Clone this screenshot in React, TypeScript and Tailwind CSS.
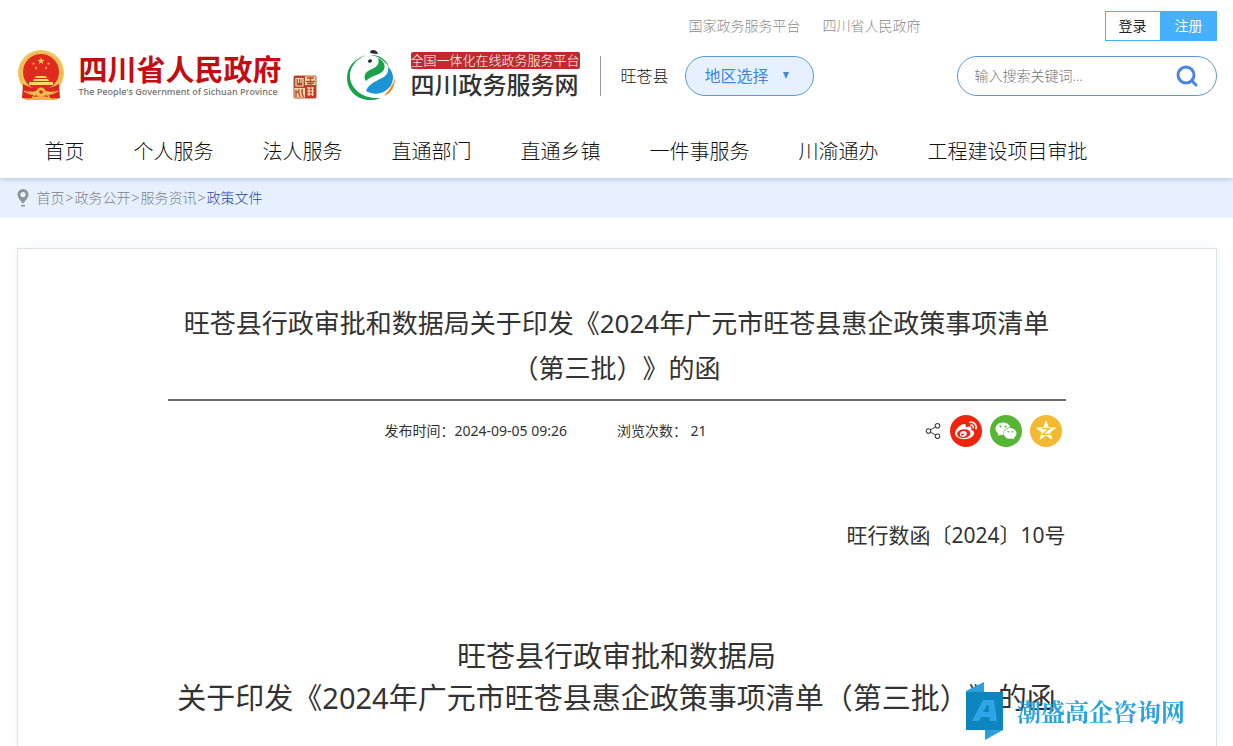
import React from 'react';
import { Search, Share2 } from 'lucide-react';
import { FaWeibo, FaWeixin } from 'react-icons/fa';

interface NavItem {
  label: string;
  href: string;
}

const topLinks: NavItem[] = [
  { label: '国家政务服务平台', href: '#national' },
  { label: '四川省人民政府', href: '#province' },
];

const navItems: NavItem[] = [
  { label: '首页', href: '#home' },
  { label: '个人服务', href: '#personal' },
  { label: '法人服务', href: '#legal' },
  { label: '直通部门', href: '#departments' },
  { label: '直通乡镇', href: '#towns' },
  { label: '一件事服务', href: '#onething' },
  { label: '川渝通办', href: '#chuanyu' },
  { label: '工程建设项目审批', href: '#projects' },
];

const crumbs: NavItem[] = [
  { label: '首页', href: '#home' },
  { label: '政务公开', href: '#open' },
  { label: '服务资讯', href: '#news' },
];

const star = '0,-1 .24,-.32 .95,-.31 .38,.12 .59,.81 0,.4 -.59,.81 -.38,.12 -.95,-.31 -.24,-.32';

const Emblem: React.FC = () => (
  <svg viewBox="0 0 48 52" className="h-[52px] w-12 shrink-0" aria-hidden="true">
    <path d="M6 34 L5 48 L12 50 L17 48 L31 48 L36 50 L43 48 L42 34 Z" fill="#d9261c" />
    <circle cx="24" cy="23" r="23" fill="#f2c45a" />
    <circle cx="24" cy="23" r="20.500" fill="none" stroke="#e8ad43" strokeWidth="1" strokeDasharray="2 1.500" />
    <circle cx="24" cy="22" r="18" fill="#e02a1d" />
    <polygon points={star} transform="translate(24 11) scale(3.6)" fill="#fbd95b" />
    <polygon points={star} transform="translate(16.500 13.500) scale(1.6)" fill="#fbd95b" />
    <polygon points={star} transform="translate(31.500 13.500) scale(1.6)" fill="#fbd95b" />
    <polygon points={star} transform="translate(19 18) scale(1.6)" fill="#fbd95b" />
    <polygon points={star} transform="translate(29 18) scale(1.6)" fill="#fbd95b" />
    <path d="M18 28 L19 26 H29 L30 28 Z M16 31 L17 29 H31 L32 31 Z M12 32 H36 V35 H12 Z" fill="#fbd95b" />
    <path d="M6 34 Q24 44 42 34 L42 40 Q34 43 29 41 L27 39 H21 L19 41 Q14 43 6 40 Z" fill="#d9261c" />
    <circle cx="24" cy="42" r="4.500" fill="#f0bd4c" />
    <circle cx="24" cy="42" r="1.800" fill="#d9261c" />
    <path d="M7 41 Q13 45 18 44 L15 49 L8 49 M41 41 Q35 45 30 44 L33 49 L40 49" fill="none" stroke="#efb444" strokeWidth="1.500" />
    <path d="M15 48 Q24 44 33 48 V50 H15 Z" fill="#efb444" />
  </svg>
);

const Seal: React.FC = () => (
  <svg viewBox="0 0 24 24" className="h-6 w-6 shrink-0" aria-hidden="true">
    <rect x="1" y="1" width="22" height="22" rx="1" fill="#f6dcae" stroke="#c0542f" />
    <rect x="1" y="1" width="11" height="12" fill="#b5432c" />
    <rect x="12" y="10" width="11" height="13" fill="#c4392b" />
    <g fill="none" stroke="#f8dfb5" strokeWidth="1.200">
      <path d="M3 3.500 H10 V11 H3 Z M5.500 4 V8 M8 4 V8" />
      <path d="M14 13 H21 M14 16 H21 M14 19 H21 M16 12 V21 M19.500 12 V21" />
    </g>
    <g fill="none" stroke="#bb4a2c" strokeWidth="1.400">
      <path d="M14 3 H21 M13 6.500 H22 M17.500 2 V10 M14 8.500 H21" />
      <path d="M3 15 V22 M6 14 Q5 18 7 22 M9.500 14 Q8 18 10.500 22 M3 17 H6" />
    </g>
  </svg>
);

const ServiceLogo: React.FC = () => (
  <svg viewBox="0 0 50 52" className="h-[52px] w-[50px] shrink-0" aria-hidden="true">
    <path d="M20 5 C7 9 1 18 1 28 C1 41 12 51 26 50 C29 50 32 49 34 48 C19 49 6 41 4 28 C3 18 9 10 20 5 Z" fill="#18a34a" />
    <path d="M24 5 C33 4 41 10 43 17 C38 10 32 6 24 5 Z" fill="#18a34a" />
    <path d="M24 3 Q24 0 27 0 Q31 0 32 4 Q28 4 24 3 Z" fill="#2d2d2d" />
    <ellipse cx="24" cy="11" rx="2.200" ry="1.600" fill="#2d2d2d" transform="rotate(-30 24 11)" />
    <path d="M32 8 C39 11 40 17 37 21 C34 25 26 25 20 31 C17 27 19 22 24 20 C31 17 34 14 32 8 Z" fill="#18a34a" />
    <path d="M42 17 C50 24 48 36 39 41 C33 45 25 44 20 41 C22 36 26 33 32 30 C39 27 43 24 42 17 Z" fill="#1a94d2" />
    <path d="M49 28 C49 36 46 43 38 46 C42 41 46 37 49 28 Z" fill="#ef8b22" />
  </svg>
);

const PinIcon: React.FC = () => (
  <svg viewBox="0 0 12 18" className="h-[18px] w-3 shrink-0" aria-hidden="true">
    <path fillRule="evenodd" d="M6 0 A5.500 5.500 0 0 1 11.500 5.500 C11.500 9 8 12 6 15 C4 12 .5 9 .5 5.500 A5.500 5.500 0 0 1 6 0 Z M6 3 A2.600 2.600 0 1 0 6 8.200 A2.600 2.600 0 1 0 6 3 Z" fill="#8f9499" />
    <path d="M4 16 H8 V17.500 H4 Z" fill="#8f9499" />
  </svg>
);

const QzoneIcon: React.FC = () => (
  <svg viewBox="-12 -12 24 24" className="h-5 w-5" aria-hidden="true">
    <polygon points={star} transform="scale(11.5)" fill="#fff" stroke="#fff" strokeWidth=".12" strokeLinejoin="round" />
    <path d="M-5 -3 H4 L-4 4 H6" fill="none" stroke="#f4b934" strokeWidth="1.500" />
  </svg>
);

const Watermark: React.FC = () => (
  <div className="pointer-events-none fixed right-12 bottom-1.5 flex items-center gap-[13px]">
    <svg viewBox="0 0 38 58" className="h-[58px] w-[38px]" aria-hidden="true">
      <path d="M0 9 L18 0 V12 H0 Z" fill="#2aa0dc" />
      <path d="M0 10 H37 V48 H0 Z" fill="#0e86bd" />
      <path d="M19 58 V48 H37 Z" fill="#2aa0dc" />
      <path fillRule="evenodd" d="M6 39 L17 18 H28 L31 39 H24 L23.500 35 H15 L13 39 Z M17 30 H23 L22.500 23 H21 Z" fill="#2ea5e6" />
    </svg>
    <span className="font-['Noto_Serif_CJK_SC','Noto_Sans_CJK_SC',serif] text-2xl font-bold text-[#2ba3dc]">潮盛高企咨询网</span>
  </div>
);

const Header: React.FC = () => (
  <header className="relative z-10 bg-white pt-[11px] pb-1.5 shadow-[0_1px_5px_rgba(60,80,140,0.3)]">
    <div className="mx-auto max-w-[1200px]">
      <div className="flex h-[30px] items-center justify-end text-sm">
        <div className="mr-[184px] flex gap-[22px] text-[#8c8c8c]">
          {topLinks.map((link) => (
            <a key={link.href} href={link.href} className="font-light">{link.label}</a>
          ))}
        </div>
        <button type="button" className="h-[30px] w-14 border border-[#45b1f5] text-[#222]">登录</button>
        <button type="button" className="h-[30px] w-14 bg-[#45b0fb] text-white">注册</button>
      </div>

      <div className="flex h-[70px] items-center">
        <Emblem />
        <div className="ml-[14px]">
          <p className="text-[29px] leading-8 font-bold text-[#c40d12]">四川省人民政府</p>
          <p className="font-['Open_Sans',sans-serif] text-[9px] leading-3 font-semibold text-[#777]">The People's Government of Sichuan Province</p>
        </div>
        <div className="ml-[11px] self-end pb-3">
          <Seal />
        </div>
        <div className="ml-[29px]">
          <ServiceLogo />
        </div>
        <div className="ml-[15px]">
          <p className="rounded-xs bg-[#bd2b2d] text-[13px] leading-[17px] font-light text-white">全国一体化在线政务服务平台</p>
          <p className="text-2xl leading-8 font-medium text-[#333]">四川政务服务网</p>
        </div>
        <div className="ml-5 h-10 w-px bg-[#999]" />
        <span className="ml-5 text-base font-light text-[#111]">旺苍县</span>
        <div className="relative ml-4 text-[#3f86dc]">
          <select
            aria-label="地区选择"
            className="h-10 w-[129px] appearance-none rounded-full border border-[#5b98d6] bg-[#e6f0fe] pl-[19px] text-base"
          >
            <option>地区选择</option>
          </select>
          <svg viewBox="0 0 8 8" className="pointer-events-none absolute top-4 right-6 h-2 w-2" aria-hidden="true">
            <path d="M1 0 H7 L4 7 Z" fill="#3f86dc" />
          </svg>
        </div>
        <form className="ml-auto flex h-10 w-[260px] items-center rounded-full border border-[#5b98d6] pr-[17px] pl-[17px]">
          <input
            type="text"
            aria-label="搜索"
            placeholder="输入搜索关键词..."
            className="min-w-0 flex-1 text-sm font-light outline-none placeholder:text-[#757575]"
          />
          <button type="button" aria-label="搜索">
            <Search className="h-6 w-6 text-[#4a86e0]" strokeWidth={3} />
          </button>
        </form>
      </div>

      <nav className="mt-[21px] flex gap-[49px] pl-7 text-xl leading-10 font-light text-[#111]">
        {navItems.map((item) => (
          <a key={item.href} href={item.href} className="whitespace-nowrap">{item.label}</a>
        ))}
      </nav>
    </div>
  </header>
);

const Breadcrumb: React.FC = () => (
  <div className="bg-[#e6f0fe]">
    <div className="mx-auto flex h-10 max-w-[1200px] items-center gap-2 text-sm font-light text-[#7d8287]">
      <PinIcon />
      <div className="flex gap-px">
        {crumbs.map((crumb) => (
          <React.Fragment key={crumb.href}>
            <a href={crumb.href}>{crumb.label}</a>
            <span>&gt;</span>
          </React.Fragment>
        ))}
        <a href="#policy" className="text-[#1f48a5]">政策文件</a>
      </div>
    </div>
  </div>
);

const ShareBar: React.FC = () => (
  <div className="flex items-center gap-2 pr-1">
    <Share2 className="h-[18px] w-[18px] text-[#444]" strokeWidth={1.5} />
    <button type="button" aria-label="微博" className="flex h-8 w-8 items-center justify-center rounded-full bg-[#f0230f] text-white">
      <FaWeibo className="h-[22px] w-[22px]" />
    </button>
    <button type="button" aria-label="微信" className="flex h-8 w-8 items-center justify-center rounded-full bg-[#56b535] text-white">
      <FaWeixin className="h-[22px] w-[22px]" />
    </button>
    <button type="button" aria-label="QQ空间" className="flex h-8 w-8 items-center justify-center rounded-full bg-[#f4b934] text-white">
      <QzoneIcon />
    </button>
  </div>
);

export default function App() {
  return (
    <div className="flex min-h-screen flex-col bg-white font-['Noto_Sans','Noto_Sans_CJK_SC',sans-serif] text-[#333] [text-spacing-trim:space-all]">
      <Header />
      <Breadcrumb />
      <main className="mx-auto mt-[30px] w-full max-w-[1200px] flex-1 border border-b-0 border-[#dbe1e8] px-[150px] pt-[52px] shadow-[0_0_12px_rgba(70,130,220,0.08)]">
        <h1 className="border-b-2 border-[#6b6b6b] pb-2 text-center text-[26px] leading-[45px]">
          旺苍县行政审批和数据局关于印发《2024年广元市旺苍县惠企政策事项清单（第三批）》的函
        </h1>
        <div className="flex h-[60px] items-center">
          <div className="flex flex-1 justify-center gap-[50px] text-sm">
            <span>发布时间：2024-09-05 09:26</span>
            <span>浏览次数： 21</span>
          </div>
          <ShareBar />
        </div>
        <article>
          <p className="mt-[53px] text-right text-[21px] leading-[42px]">旺行数函〔2024〕10号</p>
          <h2 className="mt-[79px] text-center text-[29px] leading-[42px]">
            旺苍县行政审批和数据局
            <br />
            关于印发《2024年广元市旺苍县惠企政策事项清单（第三批）》的函
          </h2>
        </article>
      </main>
      <Watermark />
    </div>
  );
}
